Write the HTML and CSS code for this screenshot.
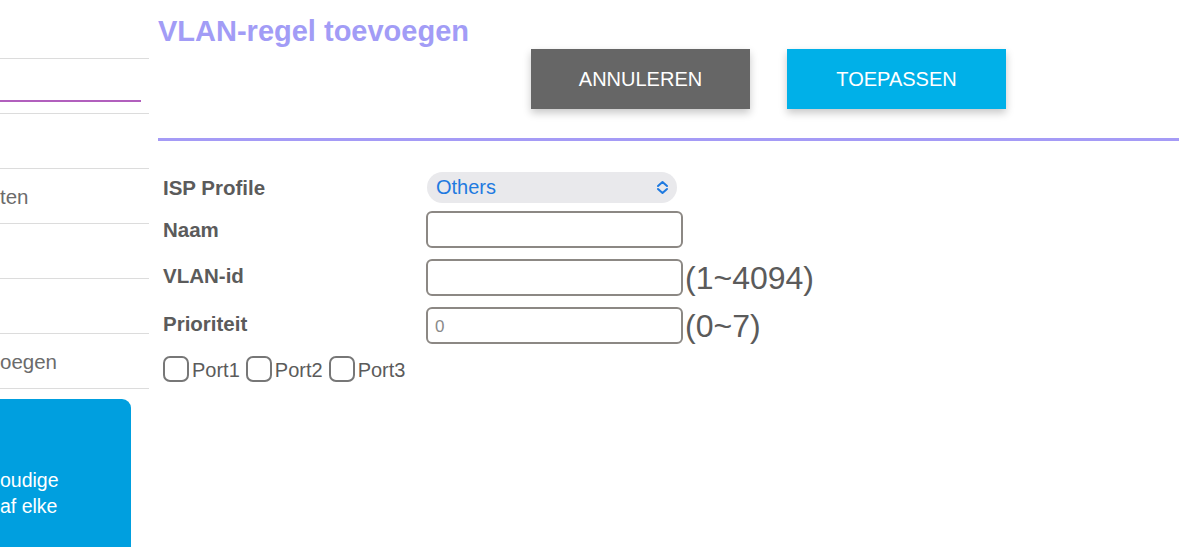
FILE: index.html
```html
<!DOCTYPE html>
<html lang="nl">
<head>
<meta charset="utf-8">
<title>VLAN-regel toevoegen</title>
<link rel="stylesheet" href="styles.css">
</head>
<body>
<aside class="sidebar">
  <div class="nav-item nav-first"></div>
  <div class="nav-item nav-active"><span class="active-bar"></span></div>
  <div class="nav-item"></div>
  <div class="nav-item"><span class="nav-text">ten</span></div>
  <div class="nav-item"></div>
  <div class="nav-item"></div>
  <div class="nav-item"><span class="nav-text">oegen</span></div>
  <div class="promo">
    <p class="promo-text">oudige<br>af elke</p>
  </div>
</aside>
<main class="main">
  <h1 class="title">VLAN-regel toevoegen</h1>
  <div class="actions">
    <button class="btn btn-cancel">ANNULEREN</button>
    <button class="btn btn-apply">TOEPASSEN</button>
  </div>
  <div class="divider"></div>
  <form class="form">
    <label class="label">ISP Profile</label>
    <div class="field">
      <div class="select">
        <span class="select-value">Others</span>
        <svg class="chev" width="13" height="15" viewBox="0 0 13 15"><path d="M2 6 L6.5 2 L11 6 M2 9 L6.5 13 L11 9" fill="none" stroke="#1f7ae0" stroke-width="2" stroke-linecap="round" stroke-linejoin="round"/></svg>
      </div>
    </div>
    <label class="label">Naam</label>
    <div class="field"><input class="input" type="text"></div>
    <label class="label">VLAN-id</label>
    <div class="field field-shift"><input class="input" type="text"><span class="range">(1~4094)</span></div>
    <label class="label">Prioriteit</label>
    <div class="field field-shift"><input class="input" type="text" placeholder="0"><span class="range">(0~7)</span></div>
  </form>
  <div class="ports">
    <span class="check"></span><span class="port">Port1</span>
    <span class="check"></span><span class="port">Port2</span>
    <span class="check"></span><span class="port">Port3</span>
  </div>
</main>
</body>
</html>
```
FILE: styles.css
```css
* { box-sizing: border-box; }
html, body { margin: 0; padding: 0; background: #fff; }
body {
  display: flex;
  font-family: "Liberation Sans", Arial, sans-serif;
  width: 1179px;
  height: 547px;
  overflow: hidden;
}
.sidebar {
  width: 149px;
  flex: none;
  overflow: hidden;
  display: flex;
  flex-direction: column;
}
.nav-item {
  flex: none;
  height: 55px;
  border-bottom: 1px solid #dcdcdc;
  display: flex;
  align-items: center;
  position: relative;
}
.nav-first { height: 59px; }
.active-bar {
  position: absolute;
  left: 0;
  top: 41px;
  width: 141px;
  height: 2px;
  background: #b15fbd;
}
.nav-text {
  font-size: 20.5px;
  color: #6b6b6b;
  padding-top: 2px;
}
.promo {
  flex: none;
  margin-top: 10px;
  width: 131px;
  height: 160px;
  background: #009fdf;
  border-top-right-radius: 9px;
  color: #fff;
  padding-top: 68px;
}
.promo-text {
  margin: 0;
  font-size: 19.5px;
  line-height: 26px;
}
.main {
  flex: 1;
  padding-left: 9px;
  padding-top: 14px;
  display: flex;
  flex-direction: column;
}
.title {
  margin: 0;
  font-size: 29px;
  line-height: 34px;
  font-weight: bold;
  color: #a29cf6;
}
.actions {
  display: flex;
  gap: 37px;
  margin-top: 1px;
  padding-left: 373px;
}
.btn {
  width: 219px;
  height: 60px;
  border: none;
  border-radius: 0;
  font-family: "Liberation Sans", Arial, sans-serif;
  font-size: 20px;
  color: #fff;
  box-shadow: 0 4px 8px rgba(0,0,0,0.22);
  padding: 0;
}
.btn-cancel { background: #666666; }
.btn-apply { background: #00b0e8; }
.divider {
  margin-top: 29px;
  height: 3px;
  background: #a59bf6;
}
.form {
  margin-top: 31px;
  display: grid;
  grid-template-columns: 263px 1fr;
  row-gap: 8px;
  align-items: center;
  padding-left: 5px;
}
.label {
  font-size: 20.5px;
  font-weight: bold;
  color: #5b5b5b;
}
.field {
  display: flex;
  align-items: center;
}
.field-shift { margin-top: 3px; }
.select {
  width: 250px;
  height: 31px;
  border-radius: 16px;
  background: #e9e9ec;
  display: flex;
  align-items: center;
  justify-content: space-between;
  padding: 0 8px 0 9px;
  margin-left: 1px;
}
.select-value {
  font-size: 20px;
  color: #1f7ae0;
}
.chev { display: block; }
.input {
  width: 257px;
  height: 37px;
  border: 2px solid #8c8884;
  border-radius: 6px;
  padding: 2px 7px 0;
  font-family: "Liberation Sans", Arial, sans-serif;
  font-size: 17px;
  color: #333;
  background: #fff;
  margin: 0;
}
.input::placeholder { color: #8a8a8a; }
.range {
  font-size: 32px;
  color: #5b5b5b;
  margin-left: 2px;
  line-height: 34px;
}
.ports {
  margin-top: 12px;
  padding-left: 5px;
  display: flex;
  align-items: center;
}
.check {
  width: 26px;
  height: 26px;
  border: 2px solid #777;
  border-radius: 7px;
  margin-right: 3px;
}
.port {
  font-size: 20px;
  color: #5b5b5b;
  margin-right: 6px;
  padding-top: 3px;
}
```
